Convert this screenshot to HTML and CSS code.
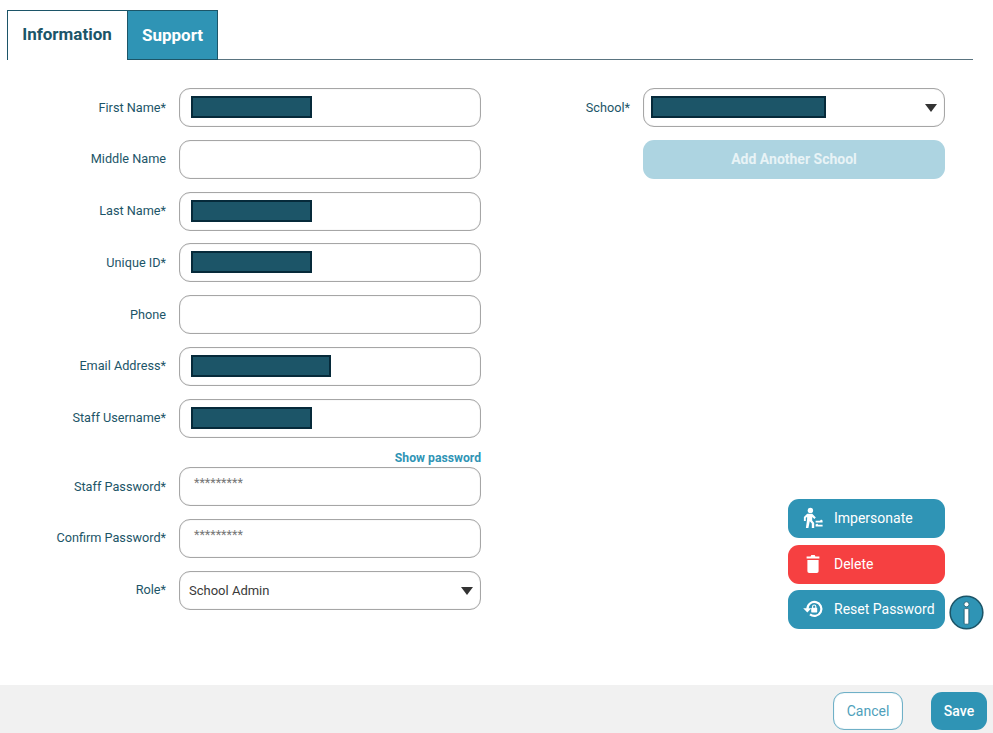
FILE: index.html
```html
<!DOCTYPE html>
<html lang="en">
<head>
<meta charset="utf-8">
<title>Staff</title>
<link rel="stylesheet" href="styles.css">
</head>
<body>
<div class="page">
  <nav class="tabs">
    <a class="tab tab-active">Information</a>
    <a class="tab tab-other">Support</a>
  </nav>
  <main class="content">
    <section class="col-left">
      <div class="row"><label class="lbl">First Name*</label><div class="field"><span class="redact r-short"></span></div></div>
      <div class="row"><label class="lbl">Middle Name</label><div class="field"></div></div>
      <div class="row"><label class="lbl">Last Name*</label><div class="field"><span class="redact r-short"></span></div></div>
      <div class="row"><label class="lbl">Unique ID*</label><div class="field"><span class="redact r-short"></span></div></div>
      <div class="row"><label class="lbl">Phone</label><div class="field"></div></div>
      <div class="row"><label class="lbl">Email Address*</label><div class="field"><span class="redact r-mid"></span></div></div>
      <div class="row"><label class="lbl">Staff Username*</label><div class="field"><span class="redact r-short"></span></div></div>
      <div class="show-line"><a class="show">Show password</a></div>
      <div class="row"><label class="lbl">Staff Password*</label><div class="field field-pw"><span class="stars">*********</span></div></div>
      <div class="row"><label class="lbl">Confirm Password*</label><div class="field field-pw"><span class="stars">*********</span></div></div>
      <div class="row"><label class="lbl">Role*</label><div class="field field-select"><span class="val">School Admin</span><span class="caret"></span></div></div>
    </section>
    <section class="col-right">
      <div class="row"><label class="lbl lbl-school">School*</label><div class="field field-school"><span class="redact r-long"></span><span class="caret"></span></div></div>
      <div class="row"><span class="lbl lbl-school"></span><button class="btn-add">Add Another School</button></div>
      <div class="actions">
        <button class="act act-blue">
          <svg class="ico" viewBox="0 0 22 22" width="22" height="22"><circle cx="8.4" cy="3.4" r="2.7" fill="#fff"/><path d="M5.2 6.8h5l3.6 3.8-1.4 1.4-2.2-2v3.4l2 2.6V21h-2.4v-4.6l-2-2.2L6.4 21H3.9l1.2-9V9.8l-1.3 1.2v3H1.9V9.9z" fill="#fff"/><path d="M13.6 14.6h7M18.6 13l1.9 1.6M13.6 18.6h7M15.6 17l-1.9 1.6" fill="none" stroke="#fff" stroke-width="1.6"/></svg>
          <span>Impersonate</span>
        </button>
        <button class="act act-red">
          <svg class="ico" viewBox="0 0 22 22" width="22" height="22"><path d="M4.6 3.4h4l.7-1.3h3.4l.7 1.3h4v2.2H4.6z" fill="#fff"/><path d="M5.4 7h11.2v11.2a1.8 1.8 0 0 1-1.8 1.8H7.2a1.8 1.8 0 0 1-1.8-1.8z" fill="#fff"/></svg>
          <span>Delete</span>
        </button>
        <div class="act-wrap">
          <button class="act act-blue">
            <svg class="ico" viewBox="0 0 22 22" width="22" height="22"><path d="M5.4 11a7 7 0 1 1 2.6 5.4" fill="none" stroke="#fff" stroke-width="2.2"/><path d="M1.2 10.2h8.2l-4.1 4.4z" fill="#fff"/><rect x="9.2" y="9.8" width="6" height="4.6" rx=".6" fill="#fff"/><path d="M10.6 10V8.6a1.6 1.6 0 0 1 3.2 0V10" fill="none" stroke="#fff" stroke-width="1.1"/></svg>
            <span>Reset Password</span>
          </button>
          <span class="info" aria-label="info">
            <svg viewBox="0 0 36 36" width="35" height="35"><circle cx="18" cy="18" r="16.8" fill="#2f94b5" stroke="#1c5568" stroke-width="1.6"/><circle cx="18" cy="9.6" r="2.6" fill="#fff" stroke="#1c5568" stroke-width=".8"/><rect x="15.6" y="14" width="4.8" height="16" rx="1" fill="#fff" stroke="#1c5568" stroke-width=".8"/></svg>
          </span>
        </div>
      </div>
    </section>
  </main>
  <footer class="foot">
    <button class="btn-cancel">Cancel</button>
    <button class="btn-save">Save</button>
  </footer>
</div>
</body>
</html>
```

FILE: styles.css
```css
* { box-sizing: border-box; }
html, body { margin: 0; padding: 0; background: #fff; }
body { font-family: "Roboto", "Noto Sans", sans-serif; font-size: 14px; color: #1c5568; }
.page { width: 993px; height: 733px; display: flex; flex-direction: column; overflow: hidden; }

.tabs { display: flex; margin: 10px 20px 0 7px; border-bottom: 1px solid #5a7480; height: 50px; }
.tab { display: flex; align-items: center; justify-content: center; font-size: 17px; font-weight: 700; height: 50px; border: 1px solid #1c5568; }
.tab-active { width: 120px; background: #fff; color: #1c5568; border-bottom: 0; padding: 0 1px 3px 0; border-right: 0; }
.tab-other { width: 91px; background: #2f94b5; color: #fff; padding-bottom: 1px; }

.content { flex: 1; display: flex; padding-top: 28px; }
.col-left { width: 481px; display: flex; flex-direction: column; }
.col-right { width: 464px; display: flex; flex-direction: column; }

.row { display: flex; align-items: center; height: 39px; margin-bottom: 12.75px; }
.lbl { width: 166px; margin-right: 13px; padding-bottom: 1px; text-align: right; font-size: 12.7px; color: #1c5568; flex: none; }
.lbl-school { width: 149px; margin-right: 13px; }

.field { width: 302px; height: 39px; flex: none; background: #fff; border: 1px solid #a6a6a6; box-shadow: inset 0 0 1px #c4c4c4; border-radius: 11px; display: flex; align-items: center; padding-left: 11px; position: relative; }
.redact { display: block; height: 22px; background: #1c5568; border: 2px solid #062a3a; margin-bottom: 1px; }
.r-short { width: 121px; }
.r-mid { width: 140px; }
.r-long { width: 175px; }
.field-school { padding-left: 7px; }
.field-select { padding-left: 9px; }
.val { font-size: 13px; color: #3a3a3a; }
.caret { position: absolute; right: 7px; top: 15px; width: 0; height: 0; border-left: 6px solid transparent; border-right: 6px solid transparent; border-top: 8.5px solid #333; }

.show-line { height: 16.75px; margin-top: -1px; margin-bottom: 1px; display: flex; justify-content: flex-end; align-items: center; }
.show { font-size: 12.2px; font-weight: 700; color: #2f94b5; }
.field-pw { padding-left: 14px; align-items: flex-start; padding-top: 7px; }
.stars { font-size: 12.6px; color: #777; }

.btn-add { width: 302px; height: 39px; flex: none; background: #add4e1; border: 0; border-radius: 11px; color: #e8f3f6; font: 700 14px "Roboto", sans-serif; }

.actions { margin-top: auto; margin-bottom: 56px; display: flex; flex-direction: column; align-items: flex-end; gap: 6.5px; }
.act-wrap { position: relative; }
.act { width: 157px; height: 39px; border: 0; border-radius: 11px; color: #fff; font: 400 14px "Roboto", sans-serif; display: flex; align-items: center; padding: 0 0 1px 14px; gap: 10px; }
.act-blue { background: #2f94b5; }
.act-red { background: #f64041; }
.ico { flex: none; }
.info { position: absolute; left: 161px; top: 5px; width: 35px; height: 35px; display: block; }

.foot { height: 48px; flex: none; background: #f1f1f1; display: flex; justify-content: flex-end; align-items: flex-start; padding: 7px 6px 0 0; gap: 28px; }
.btn-cancel { width: 70px; height: 38px; background: #fff; border: 1px solid #6fb0c7; box-shadow: inset 0 0 1px #8cc0d2; border-radius: 11px; color: #4f9fbb; font: 400 14px "Roboto", sans-serif; }
.btn-save { width: 56px; height: 38px; background: #2f94b5; border: 0; border-radius: 11px; color: #fff; font: 500 14px "Roboto", sans-serif; }
```
